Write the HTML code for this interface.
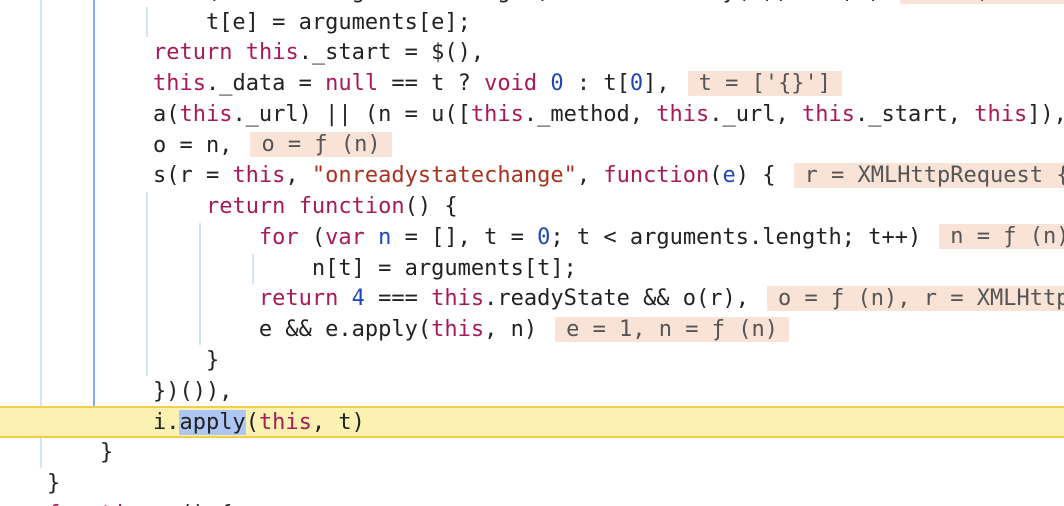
<!DOCTYPE html>
<html><head><meta charset="utf-8"><style>
html,body{margin:0;padding:0;background:#fff;width:1064px;height:506px;overflow:hidden;position:relative}
.l{position:absolute;left:47px;height:31px;line-height:31px;white-space:pre;font-family:"DejaVu Sans Mono","Liberation Mono",monospace;font-size:22px;color:#222;z-index:3}
.k{color:#a8195a}.s{color:#a8321f}.n{color:#1f47b8}
.b{display:inline-block;background:#f9e3d6;color:#555;height:25px;line-height:25px;margin-left:18px;padding:0 11px;vertical-align:middle;position:relative;top:-1px}
.g{position:absolute;width:2px;z-index:1}
.hl{position:absolute;left:0;top:406px;width:1064px;height:28px;background:#fbf1b0;border-top:2px solid #f0ce4f;border-bottom:2px solid #f0ce4f;z-index:2}
.sel{background:#aec6f5}
</style></head><body>
<div class="hl"></div>
<div class="g" style="left:40px;top:0;height:468px;background:#d6e2fb"></div>
<div class="g" style="left:93px;top:0;height:406px;background:#86a9f0"></div>
<div class="g" style="left:146px;top:7px;height:30px;background:#d6e2fb"></div>
<div class="g" style="left:146px;top:192px;height:184px;background:#d6e2fb"></div>
<div class="g" style="left:199px;top:223px;height:122px;background:#d6e2fb"></div>
<div class="g" style="left:252px;top:254px;height:30px;background:#d6e2fb"></div>

<div class="l" style="top:-24px">        <span class="k">for</span> (<span class="k">var</span> e = arguments.length, t = <span class="k">new</span> Array(e); e--; )<span class="b">e = 1, t = ...</span></div>
<div class="l" style="top:6.5px">            t[e] = arguments[e];</div>
<div class="l" style="top:37.3px">        <span class="k">return</span> <span class="k">this</span>._start = $(),</div>
<div class="l" style="top:68px">        <span class="k">this</span>._data = <span class="k">null</span> == t ? <span class="k">void</span> <span class="n">0</span> : t[<span class="n">0</span>],<span class="b">t = ['{}']</span></div>
<div class="l" style="top:98.8px">        a(<span class="k">this</span>._url) || (n = u([<span class="k">this</span>._method, <span class="k">this</span>._url, <span class="k">this</span>._start, <span class="k">this</span>]),</div>
<div class="l" style="top:129.6px">        o = n,<span class="b">o = ƒ (n)</span></div>
<div class="l" style="top:160.4px">        s(r = <span class="k">this</span>, <span class="s">"onreadystatechange"</span>, <span class="k">function</span>(<span class="n">e</span>) {<span class="b">r = XMLHttpRequest {readyState: 4}</span></div>
<div class="l" style="top:191.1px">            <span class="k">return</span> <span class="k">function</span>() {</div>
<div class="l" style="top:221.9px">                <span class="k">for</span> (<span class="k">var</span> <span class="n">n</span> = [], t = <span class="n">0</span>; t &lt; arguments.length; t++)<span class="b">n = ƒ (n)</span></div>
<div class="l" style="top:252.7px">                    n[t] = arguments[t];</div>
<div class="l" style="top:283.4px">                <span class="k">return</span> <span class="n">4</span> === <span class="k">this</span>.readyState &amp;&amp; o(r),<span class="b">o = ƒ (n), r = XMLHttpRequest</span></div>
<div class="l" style="top:314.2px">                e &amp;&amp; e.apply(<span class="k">this</span>, n)<span class="b">e = 1, n = ƒ (n)</span></div>
<div class="l" style="top:345px">            }</div>
<div class="l" style="top:375.8px">        })()),</div>
<div class="l" style="top:406.5px">        i.<span class="sel">apply</span>(<span class="k">this</span>, t)</div>
<div class="l" style="top:437.3px">    }</div>
<div class="l" style="top:468px">}</div>
<div class="l" style="top:498.8px"><span class="k">function</span> <span class="n">r</span>() {</div>
</body></html>
